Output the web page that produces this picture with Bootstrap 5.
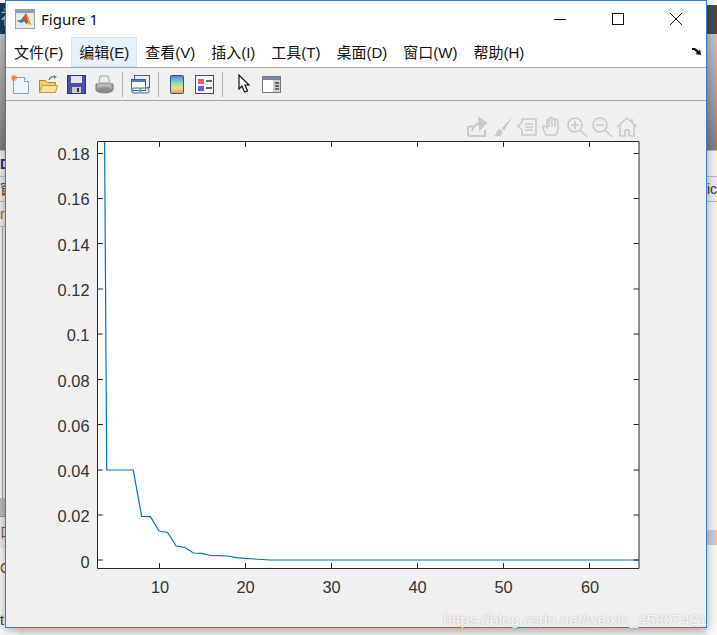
<!DOCTYPE html>
<html lang="zh-CN">
<head>
  <meta charset="UTF-8">
  <meta name="viewport" content="width=device-width, initial-scale=1.0">
  <title>Figure 1</title>
  <link href="https://cdn.jsdelivr.net/npm/bootstrap@5.3.0/dist/css/bootstrap.min.css" rel="stylesheet">
  <style>
    body {
      background-color: #f0f0f0;
      overflow: hidden;
      height: 635px;
      font-family: "Liberation Sans", "Noto Sans CJK SC", sans-serif;
    }
    /* desktop behind the figure */
    .desk { height: 635px; font-size: 14px; color: #333; overflow: hidden; }
    .desk-top { height: 3px; background: #fff; }
    .desk-title { height: 31px; background: #1d3b5c; color: #c8d2dc; padding-left: 1px; font-size: 18px; line-height: 30px; }
    .desk-fade { height: 116px; background: linear-gradient(#c4c4c4, #7f7f7f); }
    .desk-panel { height: 27px; background: #f0f0f0; border-top: 1px solid #bbb; border-bottom: 1px solid #bbb; color: #0b3c78; font-weight: 700; line-height: 26px; }
    .desk-row { height: 25px; background: #eee; border-bottom: 1px solid #bbb; line-height: 24px; }
    .desk-orange { color: #a8611c; }
    .desk-body { height: 271px; background: linear-gradient(90deg, #f4f4f4 2px, #aaa 2px, #aaa 3px, #f4f4f4 3px); }
    .desk-status { height: 19px; background: #bdbdbd; border-bottom: 1px solid #999; }
    .desk-low { height: 31px; background: #eee; line-height: 30px; color: #7a5a30; }
    .desk-foot { height: 87px; background: #fbfbfb; line-height: 40px; }
    .foot-c { color: #8a3d20; }
    .foot-t { margin-top: 12px; }
    .desk-right { width: 10px; }
    .desk-right .desk-top { height: 5px; }
    .desk-right .desk-title { height: 29px; background: #444a50; }
    .desk-right .desk-panel { background: #f4f4f4; }
    .desk-right .desk-body { height: 328px; background: #f4f4f4; }
    .desk-right .desk-status { height: 15px; background: #cfcfcf; border: 0; }
    .desk-right .desk-foot { height: 90px; }

    /* figure window */
    .fig-win {
      left: 5px; top: 0; width: 702px; height: 628px;
      background: #f0f0f0;
      border: 1px solid #2b7fd0;
      box-shadow: 0 2px 10px rgba(0, 0, 0, .35);
    }
    .fig-title { height: 36px; background: #fff; padding: 1px 1px 1px 9px; }
    .fig-name { font-family: "Noto Sans", sans-serif; font-size: 15px; color: #111; margin-left: 6px; }
    .win-btn { width: 58px; height: 34px; }
    .fig-menu { height: 31px; background: #fff; border-bottom: 1px solid #a8a8a8; font-size: 15px; color: #111; }
    .menu-item { padding: 0 7px; height: 30px; line-height: 30px; border: 1px solid transparent; white-space: nowrap; }
    .menu-on { background: #e5f1fb; border-color: #cde4f7; }
    .fig-tools { height: 33px; border-bottom: 1px solid #a8a8a8; padding-left: 4px; gap: 7px; }
    .tool-sep { width: 1px; height: 25px; background: #b0b0b0; }
    .fig-float { height: 24px; margin-top: 14px; padding-right: 68px; gap: 3px; }
    .plot-svg { display: block; margin-left: 34px; }
    .tick-txt { font-family: "Liberation Sans", sans-serif; font-size: 16.4px; fill: #333; }
    .mark-url {
      right: 10px; top: 608px;
      font-family: "Liberation Sans", sans-serif;
      font-size: 15.5px;
      color: rgba(255, 255, 255, .9);
      text-shadow: 0 0 2px rgba(120, 120, 120, .6);
    }
  </style>
</head>
<body>

  <!-- desktop -->
  <div class="desk d-flex justify-content-between">
    <div>
      <div class="desk-top"></div>
      <div class="desk-title">祷</div>
      <div class="desk-fade"></div>
      <div class="desk-panel">D</div>
      <div class="desk-row">窗</div>
      <div class="desk-row desk-orange">r</div>
      <div class="desk-body"></div>
      <div class="desk-status"></div>
      <div class="desk-low">口</div>
      <div class="desk-foot">
        <div class="foot-c">C</div>
        <div class="foot-t">t</div>
      </div>
    </div>
    <div class="desk-right">
      <div class="desk-top"></div>
      <div class="desk-title"></div>
      <div class="desk-fade"></div>
      <div class="desk-panel"></div>
      <div class="desk-row">ic</div>
      <div class="desk-body"></div>
      <div class="desk-status"></div>
      <div class="desk-foot"></div>
    </div>
  </div>

  <!-- figure window -->
  <div class="fig-win position-absolute d-flex flex-column">
    <div class="fig-title d-flex align-items-center">
      <svg width="20" height="20" viewBox="0 0 20 20">
        <rect x=".5" y=".5" width="19" height="19" fill="#e8e8e8" stroke="#a0a0a0"/>
        <rect x="1" y="1" width="18" height="3" fill="#7f9fc0"/>
        <path d="M2 12l4-1 3-4 2-3 2 4 3 8-3-2-2 1-2-3-3 1z" fill="#d9551c"/>
        <path d="M2 12l4-1 3-3 1 3-3 3z" fill="#2a7fc0"/>
        <path d="M11 4l2 4 3 8-3-2z" fill="#f0a020"/>
      </svg>
      <span class="fig-name">Figure 1</span>
      <div class="ms-auto d-flex">
        <div class="win-btn d-flex align-items-center justify-content-center">
          <svg width="12" height="12" viewBox="0 0 12 12"><path d="M0 6.5h12" stroke="#111"/></svg>
        </div>
        <div class="win-btn d-flex align-items-center justify-content-center">
          <svg width="12" height="12" viewBox="0 0 12 12"><rect x=".5" y=".5" width="11" height="11" fill="none" stroke="#111"/></svg>
        </div>
        <div class="win-btn d-flex align-items-center justify-content-center">
          <svg width="12" height="12" viewBox="0 0 12 12"><path d="M0 0l12 12M12 0L0 12" stroke="#111"/></svg>
        </div>
      </div>
    </div>

    <div class="fig-menu d-flex">
      <span class="menu-item">文件(F)</span>
      <span class="menu-item menu-on">编辑(E)</span>
      <span class="menu-item">查看(V)</span>
      <span class="menu-item">插入(I)</span>
      <span class="menu-item">工具(T)</span>
      <span class="menu-item">桌面(D)</span>
      <span class="menu-item">窗口(W)</span>
      <span class="menu-item">帮助(H)</span>
      <svg class="ms-auto me-1 mt-2" width="10" height="12" viewBox="0 0 10 12"><path d="M0 3h3l4 3 1-2 1 6-6-1 2-1-3-3H0z" fill="#111"/></svg>
    </div>

    <div class="fig-tools d-flex align-items-center">
      <!-- new -->
      <svg width="21" height="21" viewBox="0 0 21 21">
        <path d="M3.5 3.5h11l4 4v12h-15z" fill="#eef5ff" stroke="#8c9cc0"/>
        <path d="M14.5 3.5v4h4" fill="#fff" stroke="#8c9cc0"/>
        <circle cx="4" cy="4" r="3" fill="#f0a070"/>
        <circle cx="4" cy="4" r="1.2" fill="#e85a20"/>
      </svg>
      <!-- open -->
      <svg width="21" height="21" viewBox="0 0 21 21">
        <path d="M1.5 6.5h6l2 2h8v10h-16z" fill="#f2d060" stroke="#a88a30"/>
        <path d="M1.5 18.5l3-7h15l-2 7z" fill="#f8e498" stroke="#b89a40"/>
        <path d="M11 6c1-3 4-4 6-3" fill="none" stroke="#6a86a8" stroke-width="1.5"/>
        <path d="M16 1l3 2-3 2z" fill="#6a86a8"/>
      </svg>
      <!-- save -->
      <svg width="21" height="21" viewBox="0 0 21 21">
        <rect x="1.5" y="1.5" width="18" height="18" fill="#4a4fb0" stroke="#2e3080"/>
        <rect x="5" y="2" width="11" height="7" fill="#e4e4f0"/>
        <rect x="6" y="13" width="9" height="6" fill="#c8c8d8"/>
        <rect x="11" y="14" width="2" height="4" fill="#333"/>
      </svg>
      <!-- print -->
      <svg width="21" height="21" viewBox="0 0 21 21">
        <path d="M6 2h8l2 7H5z" fill="#e8eef4" stroke="#9aa"/>
        <path d="M2 10h17v6H2z" fill="#a8a8a8" stroke="#777"/>
        <ellipse cx="10.5" cy="16.5" rx="8.5" ry="3" fill="#8a8a8a"/>
        <path d="M4 11h13" stroke="#ddd"/>
      </svg>
      <div class="tool-sep"></div>
      <!-- link -->
      <svg width="21" height="21" viewBox="0 0 21 21">
        <rect x="4.5" y="1.5" width="15" height="12" fill="#e4ecf4" stroke="#41618a"/>
        <rect x="1.5" y="5.5" width="14" height="11" fill="#f4f8fc" stroke="#41618a"/>
        <rect x="2" y="6" width="13" height="2" fill="#5a7ca8"/>
        <rect x="2" y="14" width="9" height="5" rx="2.5" fill="none" stroke="#7f9ab8" stroke-width="1.6"/>
        <rect x="10" y="14" width="9" height="5" rx="2.5" fill="none" stroke="#7f9ab8" stroke-width="1.6"/>
      </svg>
      <div class="tool-sep"></div>
      <!-- colorbar -->
      <svg width="21" height="21" viewBox="0 0 21 21">
        <defs>
          <linearGradient id="barFill" x1="0" y1="0" x2="0" y2="1">
            <stop offset="0" stop-color="#5a7ad8"/>
            <stop offset=".4" stop-color="#88d8c8"/>
            <stop offset=".7" stop-color="#f0e080"/>
            <stop offset="1" stop-color="#e89070"/>
          </linearGradient>
        </defs>
        <rect x="4.5" y="1.5" width="13" height="18" rx="1" fill="url(#barFill)" stroke="#3c4f7c"/>
      </svg>
      <!-- legend -->
      <svg width="21" height="21" viewBox="0 0 21 21">
        <rect x="1.5" y="1.5" width="18" height="18" fill="#f4f6fa" stroke="#3c4f7c"/>
        <rect x="4" y="5" width="6" height="5" fill="#e86060"/>
        <rect x="4" y="12" width="6" height="5" fill="#6060e0"/>
        <path d="M12 7h6M12 14h6" stroke="#333" stroke-width="1.5"/>
      </svg>
      <div class="tool-sep"></div>
      <!-- pointer -->
      <svg class="ms-2" width="16" height="21" viewBox="0 0 16 21">
        <path d="M1 1v14l3-3 2.5 6 3-1-2.5-6h4z" fill="#fff" stroke="#111" stroke-width="1.2"/>
      </svg>
      <!-- property panel -->
      <svg width="21" height="21" viewBox="0 0 21 21">
        <rect x="1.5" y="2.5" width="18" height="16" fill="#fff" stroke="#777"/>
        <rect x="2" y="3" width="17" height="3" fill="#6d8aa6"/>
        <rect x="12" y="6" width="7" height="12" fill="#d0d0d0"/>
        <path d="M14 9h4M14 12h4M14 15h4" stroke="#444" stroke-width="1.4"/>
      </svg>
    </div>

    <div class="flex-grow-1">
      <!-- axes toolbar -->
      <div class="fig-float d-flex justify-content-end align-items-center">
        <svg width="22" height="22" viewBox="0 0 22 22" fill="none" stroke="#c9c9c9" stroke-width="2">
          <path d="M2 20V11l5-1M2 20h17v-6"/><path d="M6 15c1-5 5-8 9-8" /><path d="M13 2l7 5-6 6z" fill="#c9c9c9"/>
        </svg>
        <svg width="22" height="22" viewBox="0 0 22 22"><path d="M21 1L11 12l2 3 8-14zM9 13c-3 0-3 3-4 5l-2 2c4 1 10 0 8-5z" fill="#c9c9c9"/></svg>
        <svg width="22" height="22" viewBox="0 0 22 22" fill="none" stroke="#c9c9c9" stroke-width="1.6">
          <path d="M6 3h14v16H6v-5l-4-4 4-4zM9 8h8M9 11h8M9 14h8"/>
        </svg>
        <svg width="22" height="22" viewBox="0 0 22 22" fill="none" stroke="#c9c9c9" stroke-width="1.5">
          <path d="M5 19l-3-7c-1-2 1-3 2-2l2 2V5c0-2 2-2 2 0V3c0-2 3-2 3 0v1c0-2 3-2 3 0v1c0-2 3-2 3 0v8c0 3-1 4-2 6z"/><path d="M8 4v7M11 4v7M14 5v6"/>
        </svg>
        <svg width="22" height="22" viewBox="0 0 22 22" fill="none" stroke="#c9c9c9" stroke-width="1.6">
          <circle cx="9" cy="9" r="7"/><path d="M14 14l7 7M5 9h8M9 5v8"/>
        </svg>
        <svg width="22" height="22" viewBox="0 0 22 22" fill="none" stroke="#c9c9c9" stroke-width="1.6">
          <circle cx="9" cy="9" r="7"/><path d="M14 14l7 7M5 9h8"/>
        </svg>
        <svg width="22" height="22" viewBox="0 0 22 22" fill="none" stroke="#c9c9c9" stroke-width="1.6">
          <path d="M1 11L11 2l10 9M4 9v11h5v-6h4v6h5V9M16 3v3"/>
        </svg>
      </div>

      <!-- axes, viewBox in window pixels -->
      <svg class="plot-svg" width="620" height="470" viewBox="40 139 620 470">
        <rect x="97.5" y="141.5" width="541.5" height="427" fill="#fff"/>
        <polyline fill="none" stroke="#0072bd" stroke-width="1.2"
          points="104.6,141.5 106.7,470 133.2,470 141.7,516.3 150.4,516.6 159,531 167.6,532.5 176.2,546 185,547.5 193.4,553 202,553.3 210.6,555.5 219,555.7 228,556 236.4,557.7 245,558.3 253.6,559 262,559.5 271,560 639,560"/>
        <path fill="none" stroke="#262626" stroke-width="1"
          d="M97.5 141.5H639V568.5H97.5Z
             M97.5 560h5.4M97.5 515h5.4M97.5 470h5.4M97.5 424.5h5.4M97.5 379.5h5.4M97.5 334h5.4M97.5 289h5.4M97.5 243.5h5.4M97.5 198.5h5.4M97.5 153.5h5.4
             M639 560h-5.4M639 515h-5.4M639 470h-5.4M639 424.5h-5.4M639 379.5h-5.4M639 334h-5.4M639 289h-5.4M639 243.5h-5.4M639 198.5h-5.4M639 153.5h-5.4
             M159.5 568.5v-5.4M245.5 568.5v-5.4M331.5 568.5v-5.4M417.5 568.5v-5.4M503.5 568.5v-5.4M589.5 568.5v-5.4
             M159.5 141.5v5.4M245.5 141.5v5.4M331.5 141.5v5.4M417.5 141.5v5.4M503.5 141.5v5.4M589.5 141.5v5.4"/>
        <g class="tick-txt" text-anchor="end">
          <text x="89.5" y="160">0.18</text>
          <text x="89.5" y="205">0.16</text>
          <text x="89.5" y="251">0.14</text>
          <text x="89.5" y="296">0.12</text>
          <text x="89.5" y="341">0.1</text>
          <text x="89.5" y="387">0.08</text>
          <text x="89.5" y="432">0.06</text>
          <text x="89.5" y="477">0.04</text>
          <text x="89.5" y="522">0.02</text>
          <text x="89.5" y="568">0</text>
        </g>
        <g class="tick-txt" text-anchor="middle">
          <text x="160" y="593">10</text>
          <text x="245.5" y="593">20</text>
          <text x="331.5" y="593">30</text>
          <text x="417.5" y="593">40</text>
          <text x="503.5" y="593">50</text>
          <text x="590" y="593">60</text>
        </g>
      </svg>
    </div>
  </div>

  <div class="mark-url position-absolute">https://blog.csdn.net/weixin_45307421</div>

  <script src="https://cdn.jsdelivr.net/npm/bootstrap@5.3.0/dist/js/bootstrap.bundle.min.js"></script>
</body>
</html>
